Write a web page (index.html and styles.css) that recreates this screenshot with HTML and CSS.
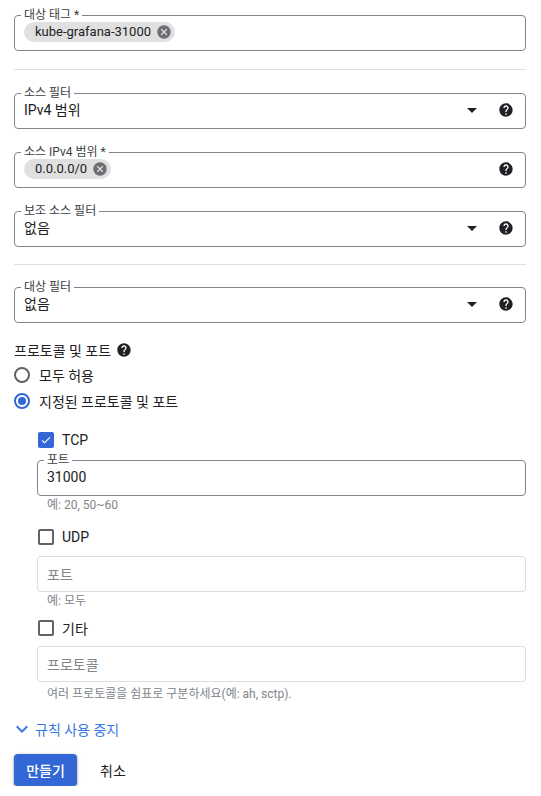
FILE: index.html
```html
<!DOCTYPE html>
<html lang="ko">
<head>
<meta charset="utf-8">
<title>방화벽 규칙</title>
<link rel="stylesheet" href="styles.css">
</head>
<body>
<div class="form">
  <fieldset class="field first">
    <legend>대상 태그 *</legend>
    <div class="row">
      <span class="chip">kube-grafana-31000
        <svg class="chip-x" viewBox="0 0 24 24"><path d="M12 2C6.47 2 2 6.47 2 12s4.47 10 10 10 10-4.47 10-10S17.53 2 12 2zm5 13.59L15.59 17 12 13.41 8.41 17 7 15.59 10.59 12 7 8.41 8.41 7 12 10.59 15.59 7 17 8.41 13.41 12 17 15.59z"/></svg>
      </span>
    </div>
  </fieldset>

  <div class="divider d1"></div>

  <fieldset class="field">
    <legend>소스 필터</legend>
    <div class="row">
      <span class="value">IPv4 범위</span>
      <span class="arrow"></span>
      <svg class="help" viewBox="0 0 24 24"><path d="M12 2C6.48 2 2 6.48 2 12s4.48 10 10 10 10-4.48 10-10S17.52 2 12 2zm1 17h-2v-2h2v2zm2.07-7.75l-.9.92C13.45 12.9 13 13.5 13 15h-2v-.5c0-1.1.45-2.1 1.17-2.83l1.24-1.26c.37-.36.59-.86.59-1.41 0-1.1-.9-2-2-2s-2 .9-2 2H8c0-2.21 1.79-4 4-4s4 1.79 4 4c0 .88-.36 1.68-.93 2.25z"/></svg>
    </div>
  </fieldset>

  <fieldset class="field">
    <legend>소스 IPv4 범위 *</legend>
    <div class="row">
      <span class="chip">0.0.0.0/0
        <svg class="chip-x" viewBox="0 0 24 24"><path d="M12 2C6.47 2 2 6.47 2 12s4.47 10 10 10 10-4.47 10-10S17.53 2 12 2zm5 13.59L15.59 17 12 13.41 8.41 17 7 15.59 10.59 12 7 8.41 8.41 7 12 10.59 15.59 7 17 8.41 13.41 12 17 15.59z"/></svg>
      </span>
      <span class="spacer"></span>
      <svg class="help" viewBox="0 0 24 24"><path d="M12 2C6.48 2 2 6.48 2 12s4.48 10 10 10 10-4.48 10-10S17.52 2 12 2zm1 17h-2v-2h2v2zm2.07-7.75l-.9.92C13.45 12.9 13 13.5 13 15h-2v-.5c0-1.1.45-2.1 1.17-2.83l1.24-1.26c.37-.36.59-.86.59-1.41 0-1.1-.9-2-2-2s-2 .9-2 2H8c0-2.21 1.79-4 4-4s4 1.79 4 4c0 .88-.36 1.68-.93 2.25z"/></svg>
    </div>
  </fieldset>

  <fieldset class="field">
    <legend>보조 소스 필터</legend>
    <div class="row">
      <span class="value">없음</span>
      <span class="arrow"></span>
      <svg class="help" viewBox="0 0 24 24"><path d="M12 2C6.48 2 2 6.48 2 12s4.48 10 10 10 10-4.48 10-10S17.52 2 12 2zm1 17h-2v-2h2v2zm2.07-7.75l-.9.92C13.45 12.9 13 13.5 13 15h-2v-.5c0-1.1.45-2.1 1.17-2.83l1.24-1.26c.37-.36.59-.86.59-1.41 0-1.1-.9-2-2-2s-2 .9-2 2H8c0-2.21 1.79-4 4-4s4 1.79 4 4c0 .88-.36 1.68-.93 2.25z"/></svg>
    </div>
  </fieldset>

  <div class="divider d2"></div>

  <fieldset class="field">
    <legend>대상 필터</legend>
    <div class="row">
      <span class="value">없음</span>
      <span class="arrow"></span>
      <svg class="help" viewBox="0 0 24 24"><path d="M12 2C6.48 2 2 6.48 2 12s4.48 10 10 10 10-4.48 10-10S17.52 2 12 2zm1 17h-2v-2h2v2zm2.07-7.75l-.9.92C13.45 12.9 13 13.5 13 15h-2v-.5c0-1.1.45-2.1 1.17-2.83l1.24-1.26c.37-.36.59-.86.59-1.41 0-1.1-.9-2-2-2s-2 .9-2 2H8c0-2.21 1.79-4 4-4s4 1.79 4 4c0 .88-.36 1.68-.93 2.25z"/></svg>
    </div>
  </fieldset>

  <div class="heading">프로토콜 및 포트
    <svg class="help small" viewBox="0 0 24 24"><path d="M12 2C6.48 2 2 6.48 2 12s4.48 10 10 10 10-4.48 10-10S17.52 2 12 2zm1 17h-2v-2h2v2zm2.07-7.75l-.9.92C13.45 12.9 13 13.5 13 15h-2v-.5c0-1.1.45-2.1 1.17-2.83l1.24-1.26c.37-.36.59-.86.59-1.41 0-1.1-.9-2-2-2s-2 .9-2 2H8c0-2.21 1.79-4 4-4s4 1.79 4 4c0 .88-.36 1.68-.93 2.25z"/></svg>
  </div>

  <div class="radios">
    <div class="radio-row"><span class="radio"></span>모두 허용</div>
    <div class="radio-row"><span class="radio on"></span>지정된 프로토콜 및 포트</div>
  </div>

  <div class="proto">
    <div class="check-row tcp"><span class="check on"><svg viewBox="0 0 24 24"><path d="M9 16.17L4.83 12l-1.42 1.41L9 19 21 7l-1.41-1.41z"/></svg></span>TCP</div>
    <fieldset class="field inner">
      <legend>포트</legend>
      <div class="row"><span class="value">31000</span></div>
    </fieldset>
    <div class="hint h1">예: 20, 50~60</div>

    <div class="check-row udp"><span class="check"></span>UDP</div>
    <div class="empty e1">포트</div>
    <div class="hint h2">예: 모두</div>

    <div class="check-row other"><span class="check"></span>기타</div>
    <div class="empty e2">프로토콜</div>
    <div class="hint h3">여러 프로토콜을 쉼표로 구분하세요(예: ah, sctp).</div>
  </div>

  <div class="link"><svg viewBox="0 0 24 24"><path d="M16.59 8.59L12 13.17 7.41 8.59 6 10l6 6 6-6z"/></svg>규칙 사용 중지</div>

  <div class="actions">
    <button class="btn primary">만들기</button>
    <button class="btn flat">취소</button>
  </div>
</div>
</body>
</html>
```
FILE: styles.css
```css
* { box-sizing: border-box; }
body {
  margin: 0;
  background: #fff;
  font-family: "Roboto", "Noto Sans CJK KR", sans-serif;
  font-size: 14px;
  color: #202124;
}
.form {
  width: 526px;
  padding: 9px 0 0 14px;
}
.field {
  margin: 0 0 17px 0;
  padding: 0 11px 7px 9px;
  border: 1px solid #80868b;
  border-radius: 4px;
  min-width: 0;
}
.field legend {
  padding: 0 3px;
  margin-left: -3px;
  font-size: 12px;
  line-height: 12px;
  color: #3c4043;
}
.row {
  display: flex;
  align-items: center;
  height: 22px;
}
.value {
  flex: 1;
  line-height: 20px;
}
.spacer { flex: 1; }
.arrow {
  width: 0;
  height: 0;
  border-left: 5px solid transparent;
  border-right: 5px solid transparent;
  border-top: 5px solid #202124;
  margin-right: 21px;
}
.help {
  width: 16px;
  height: 16px;
  fill: #202124;
  flex: none;
}
.chip {
  display: inline-flex;
  align-items: center;
  height: 20px;
  padding: 0 3px 0 11px;
  background: #e0e0e0;
  border-radius: 10px;
  font-size: 13px;
  line-height: 20px;
  color: #202124;
}
.chip-x {
  width: 16px;
  height: 16px;
  margin-left: 5px;
  fill: #6b6f74;
}
.divider {
  height: 1px;
  background: #e0e0e0;
  width: 512px;
}
.d1 { margin: 18px 0 17px; }
.d2 { margin: 16px 0 16px; }
.heading {
  display: flex;
  align-items: center;
  height: 20px;
  margin-top: 17px;
  gap: 5px;
}
.heading .small { width: 16px; height: 16px; }
.radios { margin-top: 2px; }
.radio-row {
  display: flex;
  align-items: center;
  height: 26px;
}
.radio {
  width: 16px;
  height: 16px;
  border: 2px solid #5f6368;
  border-radius: 50%;
  margin-right: 9px;
  display: flex;
  align-items: center;
  justify-content: center;
}
.radio.on { border-color: #3367d6; }
.radio.on::after {
  content: "";
  width: 8px;
  height: 8px;
  border-radius: 50%;
  background: #3367d6;
}
.proto { padding-left: 23px; }
.check-row {
  display: flex;
  align-items: center;
  height: 20px;
  padding-left: 1px;
}
.check {
  width: 16px;
  height: 16px;
  border: 2px solid #5f6368;
  border-radius: 2px;
  margin-right: 8px;
  display: flex;
  align-items: center;
  justify-content: center;
}
.check.on {
  background: #3367d6;
  border-color: #3367d6;
}
.check svg { width: 14px; height: 14px; fill: #fff; }
.tcp { margin-top: 16px; }
.field.inner { margin: 4px 0 0; }
.hint {
  font-size: 12px;
  line-height: 16px;
  color: #80868b;
  padding-left: 10px;
}
.h1 { margin-top: 1px; }
.h2 { margin-top: 1px; }
.h3 { margin-top: 4px; }
.udp { margin-top: 14px; }
.other { margin-top: 9px; }
.empty {
  height: 36px;
  border: 1px solid #dadce0;
  border-radius: 4px;
  padding-left: 9px;
  display: flex;
  align-items: center;
  color: #80868b;
}
.e1 { margin-top: 9px; }
.e2 { margin-top: 8px; }
.link {
  display: flex;
  align-items: center;
  height: 20px;
  margin: 17px 0 0 -4px;
  color: #3b78e7;
}
.link svg {
  width: 24px;
  height: 24px;
  fill: #3b78e7;
  margin-right: 1px;
}
.actions {
  display: flex;
  align-items: center;
  margin-top: 15px;
}
.btn {
  font-family: inherit;
  font-size: 14px;
  font-weight: 500;
  height: 32px;
  border: none;
  border-radius: 4px;
  cursor: pointer;
}
.primary {
  width: 63px;
  padding: 0;
  background: #3367d6;
  color: #fff;
  box-shadow: 0 1px 2px rgba(0,0,0,0.3), 0 1px 3px 1px rgba(0,0,0,0.15);
}
.flat {
  background: transparent;
  color: #202124;
  font-weight: 400;
  margin-left: 8px;
  padding: 0 15px;
}
```
